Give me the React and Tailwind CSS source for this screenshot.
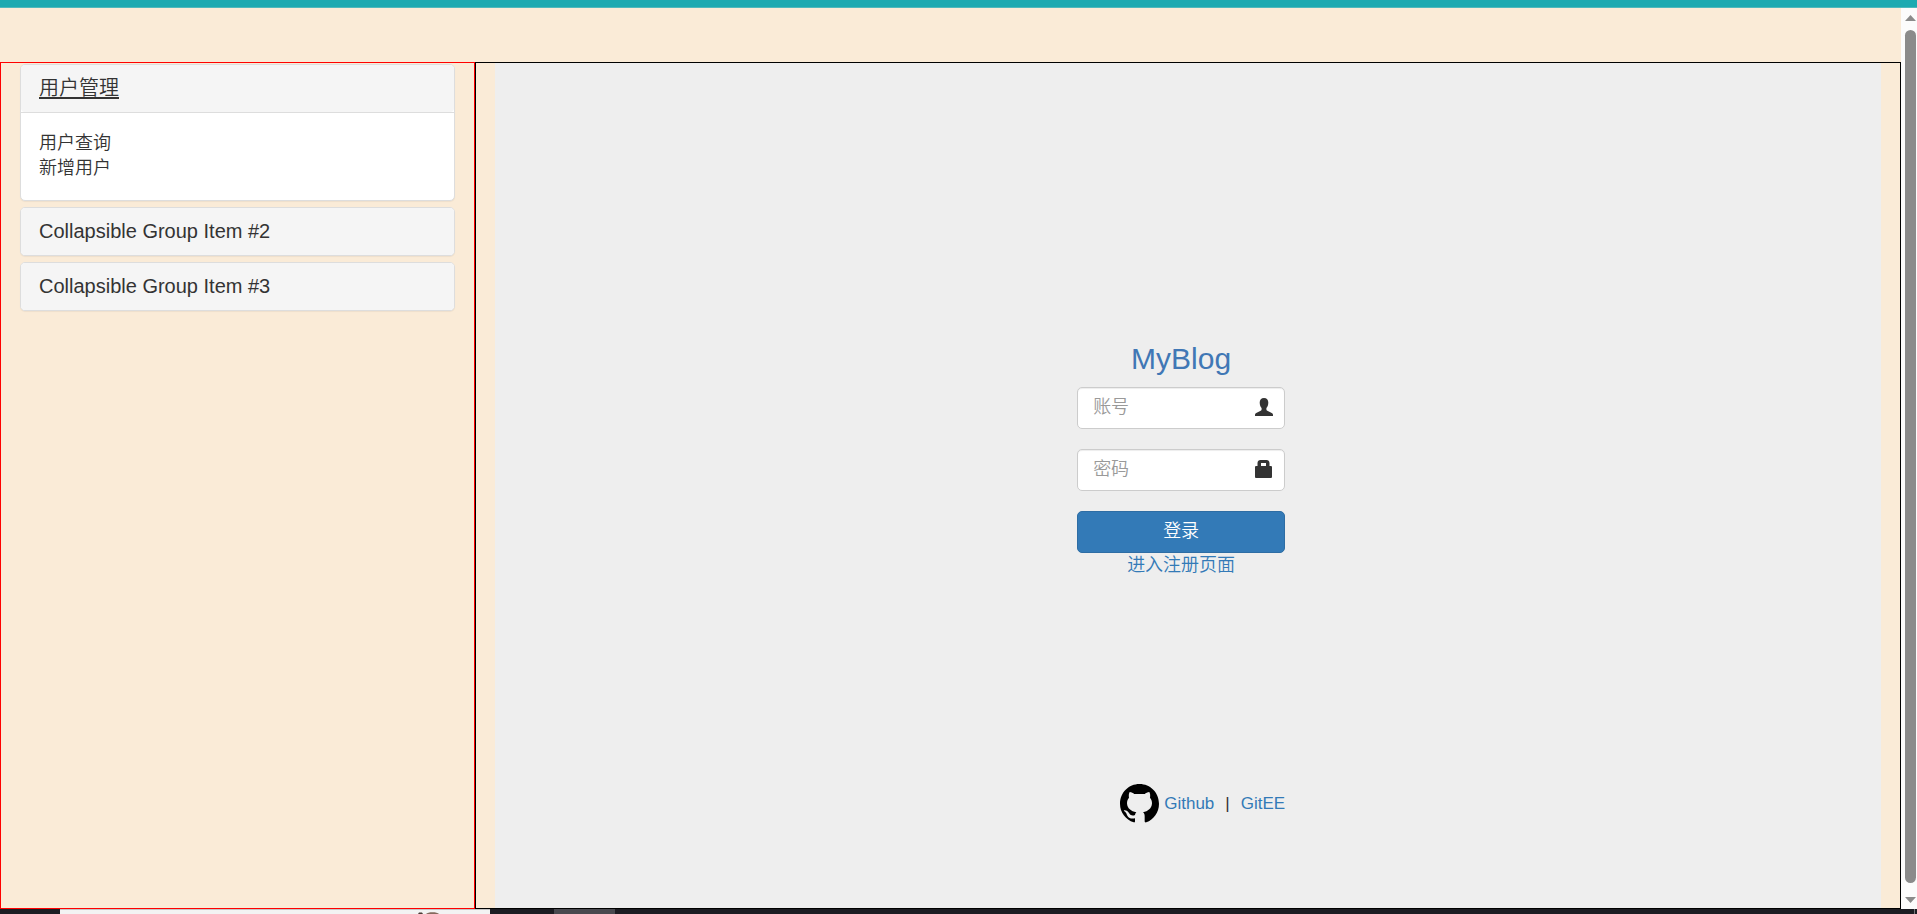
import React, { useState } from "react";

function Panel({ title, children, open, onToggle }) {
  return (
    <section className="rounded-[5px] border border-[#dddddd] bg-white shadow-[0_1px_1px_rgba(0,0,0,0.05)]">
      <h4 className="rounded-[4px] bg-[#f5f5f5] px-[18px] py-[11px] text-[20px] leading-[25px]">
        <button
          type="button"
          aria-expanded={open}
          onClick={onToggle}
          className={
            open
              ? "cursor-pointer underline decoration-2 underline-offset-2"
              : "cursor-pointer"
          }
        >
          {title}
        </button>
      </h4>
      {open && children && (
        <div className="border-t border-[#dddddd] px-[18px] pt-[18px] pb-[19px]">
          {children}
        </div>
      )}
    </section>
  );
}

function Sidebar() {
  const [open, setOpen] = useState(0);
  const toggle = (i) => setOpen(open === i ? -1 : i);
  return (
    <aside className="w-1/4 border border-[#ff0000] px-[19px] pt-px">
      <div className="flex flex-col gap-[6px]">
        <Panel title="用户管理" open={open === 0} onToggle={() => toggle(0)}>
          <ul className="text-[18px] leading-[25px]">
            <li>
              <a href="#query">用户查询</a>
            </li>
            <li>
              <a href="#create">新增用户</a>
            </li>
          </ul>
        </Panel>
        <Panel
          title="Collapsible Group Item #2"
          open={open === 1}
          onToggle={() => toggle(1)}
        />
        <Panel
          title="Collapsible Group Item #3"
          open={open === 2}
          onToggle={() => toggle(2)}
        />
      </div>
    </aside>
  );
}

function UserIcon() {
  return (
    <svg viewBox="0 0 18 18" className="size-[18px]" fill="#333333" aria-hidden="true">
      <path d="M9 0C6.2 0 4.700 1.800 4.700 4.500c0 2.300.7 4.300 1.900 5.500v1.400c0 .6-.3 1-.9 1.300L1.200 15.100C.4 15.500 0 16 0 16.800V18h18v-1.200c0-.8-.4-1.300-1.200-1.700l-4.500-2.400c-.6-.3-.9-.7-.9-1.300V10c1.200-1.200 1.900-3.200 1.900-5.500C13.300 1.800 11.800 0 9 0Z" />
    </svg>
  );
}

function LockIcon() {
  return (
    <svg viewBox="0 0 18 18" className="size-[18px]" fill="#333333" aria-hidden="true">
      <path
        fillRule="evenodd"
        d="M5.500 0h6c1.700 0 3 1.300 3 3v3h1.200c.8 0 1.300.5 1.300 1.300v9.400c0 .8-.5 1.300-1.300 1.300H1.300C.5 18 0 17.500 0 16.700V7.300C0 6.500.5 6 1.300 6h1.200V3c0-1.700 1.300-3 3-3Zm.5 3v3h5V3Z"
      />
    </svg>
  );
}

function Field({ id, type, text, icon }) {
  return (
    <div className="relative">
      <input
        id={id}
        type={type}
        placeholder={text}
        className="block h-[42px] w-full rounded-[5px] border border-[#cccccc] bg-white pr-[42px] pb-[2px] pl-[15px] text-[18px] shadow-[inset_0_1px_1px_rgba(0,0,0,0.075)] outline-none placeholder:text-[#999999] focus:border-[#66afe9]"
      />
      <label
        htmlFor={id}
        aria-label={text}
        className="absolute inset-y-0 right-[12px] flex items-center pb-[2px]"
      >
        {icon}
      </label>
    </div>
  );
}

function LoginForm() {
  return (
    <form
      className="flex w-[208px] flex-col"
      onSubmit={(e) => e.preventDefault()}
    >
      <h2 className="text-center text-[30px] leading-[34px] text-[#4077b5]">MyBlog</h2>
      <div className="mt-[11px] flex flex-col gap-[20px]">
        <Field id="account" type="text" text="账号" icon={<UserIcon />} />
        <Field id="password" type="password" text="密码" icon={<LockIcon />} />
        <button
          type="submit"
          className="h-[42px] cursor-pointer rounded-[5px] border border-[#2e6da4] bg-[#337ab7] pb-[2px] text-[18px] text-white"
        >
          登录
        </button>
      </div>
      <a href="#register" className="text-center text-[18px] leading-[25px] text-[#337ab7]">
        进入注册页面
      </a>
    </form>
  );
}

function SiteLinks() {
  return (
    <nav className="flex w-[208px] items-center justify-end text-[17px] leading-[25px] text-[#337ab7]">
      <svg viewBox="0 0 117 117" className="mr-[5px] size-[39px] shrink-0" aria-hidden="true">
        <path
          fill="#000000"
          d="M58.500 0C26 0 0 26 0 59c0 26 17 48 41 56 3 1 4-1 4-3v-9c-17 3-22-4-25-12-1-4-4-7-7-9-2-2-2-3 1-3 6 0 10 4 13 8 5 8 11 9 18 6 1-4 2-6 4-8-16-3-27-11-28-27 0-7 2-12 6-17-1-6-1-11 2-17 6 0 10 3 14 6h31c4-3 8-6 14-6 3 6 3 11 2 17 4 5 6 10 6 17-1 16-12 24-27 27 4 3 5 7 5 12v15c0 3 2 4 5 3 22-8 38-30 38-56C117 26 91 0 58.500 0Z"
        />
      </svg>
      <a href="#github">Github</a>
      <span className="px-[11px] text-[#333333]">|</span>
      <a href="#gitee">GitEE</a>
    </nav>
  );
}

function ScrollRail() {
  return (
    <div
      className="flex w-4 shrink-0 flex-col items-center bg-[#fcfcfc] pt-[7px] pb-[6px] pl-[3px]"
      aria-hidden="true"
    >
      <svg viewBox="0 0 11 6" className="h-[6px] w-[11px] shrink-0" fill="#8b8b8b">
        <path d="M5.500 0 11 6H0Z" />
      </svg>
      <div className="mt-[9px] mb-[14px] w-[11px] flex-1 rounded-full bg-[#8b8b8b]" />
      <svg viewBox="0 0 11 6" className="h-[6px] w-[11px] shrink-0" fill="#8b8b8b">
        <path d="M0 0h11L5.500 6Z" />
      </svg>
    </div>
  );
}

function TaskBar() {
  return (
    <div className="flex h-[5px] shrink-0 overflow-hidden bg-[#1c1c22]" aria-hidden="true">
      <div className="ml-[60px] flex w-[430px] justify-end border-t border-[#c4c4c4] bg-[#f3f3f3] pr-[48px]">
        <svg viewBox="0 0 24 4" className="h-[4px] w-[24px]">
          <path d="M0 4 1 2.500h3L5 4Z" fill="#4b3a35" />
          <path d="M8 4c2-2.500 11-2.500 13 0Z" fill="#85695d" />
        </svg>
      </div>
      <div className="ml-[64px] w-[61px] bg-[#49494f]" />
      <div className="mr-[2px] ml-auto w-px bg-[#77777c]" />
    </div>
  );
}

export default function App() {
  return (
    <div className="flex h-screen flex-col overflow-hidden bg-[#faebd7] font-['Liberation_Sans','Noto_Sans_CJK_SC',sans-serif] font-[350] text-[#333333]">
      <header className="h-[8px] shrink-0 border-b border-[#4fb9bc] bg-[#1caab1]" />
      <div className="flex min-h-0 flex-1">
        <div className="flex min-w-0 flex-1 pt-[54px]">
          <Sidebar />
          <main className="flex w-3/4 border border-black px-[19px]">
            <div className="flex flex-1 flex-col items-center bg-[#eeeeee] pt-[279px] pr-[14px]">
              <LoginForm />
              <div className="mt-[206px]">
                <SiteLinks />
              </div>
            </div>
          </main>
        </div>
        <ScrollRail />
      </div>
      <TaskBar />
    </div>
  );
}
